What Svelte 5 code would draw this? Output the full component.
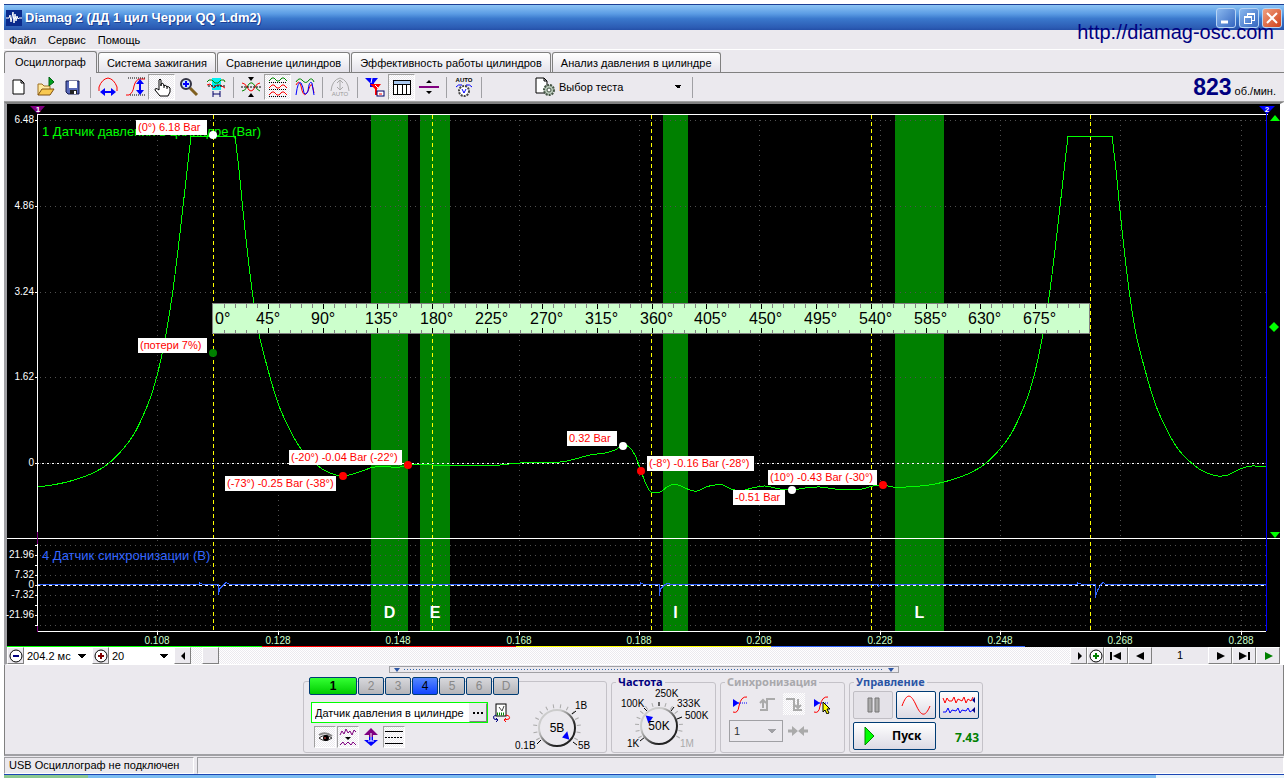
<script lang="ts">
  type Point = [number, number];

  const tabs = [
    "Осциллограф",
    "Система зажигания",
    "Сравнение цилиндров",
    "Эффективность работы цилиндров",
    "Анализ давления в цилиндре",
  ];
  let activeTab = $state(0);
  let sensor = $state("Датчик давления в цилиндре");

  const channels = ["1", "2", "3", "4", "5", "6", "D"];

  const timeLabels = ["0.108", "0.128", "0.148", "0.168", "0.188", "0.208", "0.228", "0.248", "0.268", "0.288"];
  const timeX = [157, 278, 398, 519, 639, 759, 880, 1000, 1120, 1241];

  const barAxis = [
    { y: 120, text: "6.48" },
    { y: 206, text: "4.86" },
    { y: 292, text: "3.24" },
    { y: 377, text: "1.62" },
    { y: 463, text: "0" },
  ];
  const voltAxis = [
    { y: 545, text: "" },
    { y: 555, text: "21.96" },
    { y: 565, text: "" },
    { y: 575, text: "7.32" },
    { y: 585, text: "0" },
    { y: 595, text: "-7.32" },
    { y: 605, text: "" },
    { y: 615, text: "-21.96" },
    { y: 625, text: "" },
  ];

  const bands = [
    { x: 371, width: 37, name: "D" },
    { x: 420, width: 30, name: "E" },
    { x: 663, width: 25, name: "I" },
    { x: 895, width: 49, name: "L" },
  ];
  const strokes = [213, 432, 651, 871, 1090];

  const marks = [
    { x: 136, y: 120, w: 71, text: "(0°) 6.18 Bar" },
    { x: 138, y: 338, w: 69, text: "(потери 7%)" },
    { x: 289, y: 450, w: 113, text: "(-20°) -0.04 Bar (-22°)" },
    { x: 225, y: 476, w: 111, text: "(-73°) -0.25 Bar (-38°)" },
    { x: 567, y: 431, w: 50, text: "0.32 Bar" },
    { x: 647, y: 456, w: 107, text: "(-8°) -0.16 Bar (-28°)" },
    { x: 768, y: 470, w: 109, text: "(10°) -0.43 Bar (-30°)" },
    { x: 733, y: 490, w: 52, text: "-0.51 Bar" },
  ];
  const dots = [
    { x: 213, y: 135, color: "#fff" },
    { x: 213, y: 353, color: "#008000" },
    { x: 343, y: 476, color: "#f00" },
    { x: 408, y: 465, color: "#f00" },
    { x: 623, y: 446, color: "#fff" },
    { x: 641, y: 471, color: "#f00" },
    { x: 792, y: 490, color: "#fff" },
    { x: 883, y: 485, color: "#f00" },
  ];

  const rise: Point[] = [
    [37, 487], [52, 485], [67, 482], [80, 478], [93, 473], [108, 464], [123, 449], [134, 434],
    [143, 416], [151, 396], [158, 372], [166, 334], [173, 290], [180, 233], [186, 180], [191, 136],
  ];
  const cycle: Point[] = [
    [235, 136], [239, 170], [245, 230], [252, 290], [259, 334], [270, 377], [279, 406], [290, 430],
    [301, 449], [318, 466], [330, 473], [343, 476], [353, 474], [365, 470], [375, 467], [400, 467],
    [408, 465], [432, 465], [470, 466], [500, 465], [520, 463], [560, 462], [575, 459], [590, 455],
    [605, 453], [615, 450], [623, 445], [629, 447], [635, 455], [641, 471], [646, 484], [651, 492],
    [660, 492], [667, 487], [674, 484], [681, 486], [690, 490], [697, 491], [706, 487], [715, 485],
    [723, 485], [731, 489], [741, 491], [752, 488], [765, 486], [780, 489], [792, 490], [805, 488],
    [820, 487], [835, 489], [850, 490], [862, 489], [873, 486], [883, 485], [893, 487], [906, 487],
    [929, 485], [944, 482], [957, 478], [970, 473], [985, 464], [1000, 449], [1011, 434],
    [1020, 416], [1028, 396], [1035, 372], [1043, 334], [1050, 290], [1057, 233], [1063, 180], [1068, 136],
  ];
  const fall: Point[] = [
    [1112, 136], [1116, 170], [1122, 230], [1129, 290], [1136, 334], [1147, 377], [1156, 406],
    [1167, 430], [1178, 449], [1195, 466], [1207, 473], [1218, 476], [1228, 475], [1240, 469],
    [1252, 466], [1266, 467],
  ];

  // Catmull-Rom spline through the samples
  function smooth(p: Point[]): string {
    let d = `${p[0][0]} ${p[0][1]}`;
    for (let i = 0; i < p.length - 1; i++) {
      const a = p[Math.max(i - 1, 0)];
      const b = p[i];
      const c = p[i + 1];
      const e = p[Math.min(i + 2, p.length - 1)];
      d += ` C${b[0] + (c[0] - a[0]) / 6} ${b[1] + (c[1] - a[1]) / 6} ${c[0] - (e[0] - b[0]) / 6} ${c[1] - (e[1] - b[1]) / 6} ${c[0]} ${c[1]}`;
    }
    return d;
  }

  const pressure = `M${smooth(rise)} L${smooth(cycle)} L${smooth(fall)}`;
  const sync =
    "M37 584H199V582L203 584H218V594L220 588L224 584L226 582L230 584H640V582L644 584H659V595L661 588L665 584L668 583L671 584H878V586L881 584H1077V582L1082 584H1095V597L1098 589L1101 584L1103 582L1106 584H1266";

  const rulerTicks = Array.from({ length: 79 }, (_, i) => i + 1);
  const rulerLabels = Array.from({ length: 16 }, (_, i) => i * 45);
  const degX = (deg: number) => Math.round(213 + (deg * 877) / 720);

  const ticks = (n: number, from: number, to: number) =>
    Array.from({ length: n }, (_, i) => from + ((to - from) * i) / (n - 1));
</script>

{#snippet knob(value: string, angle: number)}
  <circle r="18" fill="#ebe9ee" stroke="url(#rim)" stroke-width="2" />
  <path d="M17 1L10 -4V4Z" fill="#00f" transform="rotate({angle})" />
  <text class="knob-value" y="4" text-anchor="middle">{value}</text>
{/snippet}

<div class="screen">
  <div class="window">
    <header class="title-bar">
      <svg class="app-icon" width="16" height="16" viewBox="0 0 16 16">
        <rect width="16" height="16" fill="#0a2a8c" />
        <path d="M0 8H3L4 5L5 12L7 2L8 13L9 4L10 11L11 6L12 9L13 8H16" fill="none" stroke="#fff" />
      </svg>
      <h1>Diamag 2 (ДД 1 цил Черри QQ 1.dm2)</h1>
      <div class="caption-buttons">
        <button aria-label="Свернуть"><svg width="18" height="18"><path d="M4 13H11" stroke="#fff" stroke-width="3" /></svg></button>
        <button aria-label="Восстановить">
          <svg width="18" height="18" shape-rendering="crispEdges"><path d="M7 7V4H14V11H11M4 7H11V14H4ZM4 8H11M7 5H14" fill="none" stroke="#fff" /></svg>
        </button>
        <button class="close" aria-label="Закрыть"><svg width="18" height="18"><path d="M4 4L14 14M14 4L4 14" stroke="#fff" stroke-width="2" /></svg></button>
      </div>
    </header>
    <a class="site" href="http://diamag-osc.com">http://diamag-osc.com</a>

    <nav class="menu">
      <button>Файл</button>
      <button>Сервис</button>
      <button>Помощь</button>
    </nav>

    <div class="tabs" role="tablist">
      {#each tabs as tab, i}
        <button role="tab" class:active={activeTab === i} aria-selected={activeTab === i} onclick={() => (activeTab = i)}>{tab}</button>
      {/each}
    </div>

    <div class="toolbar">
      <button aria-label="Новый">
        <svg viewBox="0 0 20 20"><path d="M4 3H12L15 6V17H4ZM12 3V6H15" fill="#fff" stroke="#000" /></svg>
      </button>
      <button aria-label="Открыть">
        <svg viewBox="0 0 20 20">
          <path d="M2 18V7H6L8 9H14V12" fill="#ffe9a0" stroke="#a07020" />
          <path d="M2 18L6 12H18L14 18Z" fill="#f8c850" stroke="#805010" />
          <path d="M13 0V9L18 5Z" fill="#00a020" stroke="#006010" />
        </svg>
      </button>
      <button aria-label="Сохранить">
        <svg viewBox="0 0 20 20">
          <path d="M3 4H16V17H5L3 15Z" fill="#5868b8" stroke="#101850" />
          <rect x="6" y="4" width="8" height="7" fill="#fff" />
          <rect x="7" y="13" width="7" height="4" fill="#222" /><rect x="11" y="14" width="2" height="3" fill="#fff" />
        </svg>
      </button>
      <i></i>
      <button aria-label="Масштаб по горизонтали">
        <svg viewBox="0 0 20 20">
          <path d="M1 14V10Q4 2 10 1Q16 2 19 10V14" fill="none" stroke="#f00" />
          <path d="M4 15H16" stroke="#00f" stroke-width="2" /><path d="M2 15L7 11V19ZM18 15L13 11V19Z" fill="#00f" />
        </svg>
      </button>
      <button aria-label="Масштаб по вертикали">
        <svg viewBox="0 0 20 20">
          <path d="M1 18H4Q8 16 9 9Q11 2 15 2H20" fill="none" stroke="#f00" />
          <path d="M3 1H20M5 18H20" stroke="#000" stroke-dasharray="1 1" />
          <path d="M15 5V15" stroke="#00f" stroke-width="2" /><path d="M15 2L11 7H19ZM15 18L11 13H19Z" fill="#00f" />
        </svg>
      </button>
      <button class="pressed" aria-label="Рука">
        <svg viewBox="0 0 20 20">
          <path d="M7 13V3Q8 1 9 3V9V7Q11 5 12 8V9Q14 7 15 10Q17 9 18 11V15L16 19H8L3 13Q3 10 7 13Z" fill="#fff" stroke="#000" />
          <path d="M12 8V11M15 9V12" stroke="#000" />
        </svg>
      </button>
      <button aria-label="Лупа">
        <svg viewBox="0 0 20 20">
          <path d="M11 11L18 18" stroke="#806020" stroke-width="3" />
          <circle cx="7" cy="7" r="5" fill="#c8e4ff" stroke="#334" stroke-width="2" />
          <path d="M4 7H10M7 4V10" stroke="#00f" stroke-width="2" />
        </svg>
      </button>
      <button aria-label="Фрагмент">
        <svg viewBox="0 0 20 20">
          <rect x="6" y="1" width="9" height="12" fill="#00f0f0" />
          <path d="M1 5L3 3L6 3L9 6H12L15 3H18L19 5" fill="none" stroke="#080" />
          <path d="M1 8L4 7L8 11L11 8L14 8L19 11" fill="none" stroke="#f00" />
          <path d="M2 9H19" stroke="#000" stroke-dasharray="2 1" />
          <path d="M7 17H14M7 14V20M14 14V20" stroke="#006" stroke-width="1" />
        </svg>
      </button>
      <i></i>
      <button aria-label="Совместить">
        <svg viewBox="0 0 20 20">
          <path d="M1 14Q4 14 6 10Q10 2 14 9Q16 13 19 14" fill="none" stroke="#080" />
          <path d="M1 6Q4 6 6 10Q10 18 14 10Q16 6 19 6" fill="none" stroke="#f00" />
          <path d="M0 10H20" stroke="#000" stroke-dasharray="2 1" /><path d="M7 0H13L10 4ZM7 20H13L10 16Z" />
        </svg>
      </button>
      <button class="pressed" aria-label="Разнести">
        <svg viewBox="0 0 20 20">
          <path d="M1 4L4 1H6L9 4H11L14 1H16L19 4" fill="none" stroke="#080" />
          <path d="M1 11L4 8H6L9 11H11L14 8H16L19 11M1 18L4 15H6L9 18H11L14 15H16L19 18" fill="none" stroke="#f00" />
          <path d="M1 5.5H19M1 12.5H19M1 19.5H19" stroke="#000" stroke-dasharray="1 1" />
        </svg>
      </button>
      <button aria-label="Наложить">
        <svg viewBox="0 0 20 20">
          <path d="M1 5Q4 0 7 3Q11 8 14 3Q17 0 19 5" fill="none" stroke="#080" />
          <path d="M1 8Q4 2 6 9Q8 20 11 17Q13 15 15 9Q17 4 19 16" fill="none" stroke="#f00" />
          <path d="M1 18Q3 3 6 6Q8 9 9 16Q11 19 13 14Q14 3 17 6L19 18" fill="none" stroke="#00f" />
        </svg>
      </button>
      <i></i>
      <button disabled aria-label="Авто">
        <svg viewBox="0 0 20 20">
          <path d="M1 14Q2 3 10 1Q18 3 19 14M10 3V13M7 6L10 3L13 6M7 10L10 13L13 10" fill="none" stroke="#aaa" />
          <text x="10" y="19" text-anchor="middle" font-size="6" fill="#999">AUTO</text>
        </svg>
      </button>
      <i></i>
      <button aria-label="Фильтр">
        <svg viewBox="0 0 20 20">
          <path d="M0 1H13L9 6V10H5V6Z" fill="#00f" /><path d="M5 7H16L12 12V18H10V12Z" fill="#f00" />
          <path d="M7 1L6 6M10 8L13 11" stroke="#fff" />
          <rect x="12" y="14" width="7" height="5" fill="#fff" stroke="#006" /><path d="M14 17H17" stroke="#f00" />
        </svg>
      </button>
      <button class="pressed" aria-label="Таблица">
        <svg viewBox="0 0 20 20" shape-rendering="crispEdges">
          <rect x="1.5" y="3.5" width="17" height="14" fill="#fff" stroke="#000" />
          <rect x="2" y="4" width="16" height="3" fill="#a8c8f0" />
          <path d="M1 7.5H19M5.5 7V18M10.5 7V18M14.5 7V18" stroke="#000" />
        </svg>
      </button>
      <button aria-label="Разделитель">
        <svg viewBox="0 0 20 20"><path d="M0 10H20" stroke="#800080" stroke-width="2" /><path d="M7 6H13L10 3ZM7 14H13L10 17Z" /></svg>
      </button>
      <i></i>
      <button aria-label="Автонастройка">
        <svg viewBox="0 0 20 20">
          <text x="10" y="5" text-anchor="middle" font-size="6" font-weight="bold">AUTO</text>
          <circle cx="10" cy="14" r="5" fill="#fff" stroke="#444" stroke-width="2" stroke-dasharray="2 1" />
          <path d="M8 12L10 16L12 12M2 10Q4 7 8 8M18 10Q16 7 12 8" fill="none" stroke="#00f" />
        </svg>
      </button>
      <i></i>
      <label class="test-select">
        <svg width="20" height="20" viewBox="0 0 20 20">
          <path d="M1 1H9L12 4V16H1ZM9 1V4H12" fill="#fff" stroke="#000" />
          <circle cx="14" cy="13" r="5" fill="#b8c8b8" stroke="#445544" stroke-width="2" stroke-dasharray="2 1" />
          <circle cx="14" cy="13" r="2" fill="#fff" stroke="#454" />
        </svg>
        <select aria-label="Выбор теста"><option>Выбор теста</option></select>
      </label>
      <i></i>
      <p class="rpm"><strong>823</strong> об./мин.</p>
    </div>

    <main class="scope">
      <svg class="plot" viewBox="7 104 1273 542">
        <rect x="7" y="104" width="1273" height="542" />
        <g shape-rendering="crispEdges">
          {#each bands as band}
            <rect x={band.x} y="115" width={band.width} height="516" fill="#008000" />
          {/each}
          <g class="grid">
            {#each timeX as x}
              <path d="M{x}.5 120V631" />
            {/each}
            {#each barAxis as tick}
              <path d="M40 {tick.y}.5H1266" />
            {/each}
            {#each voltAxis as tick}
              <path d="M40 {tick.y}.5H1266" />
            {/each}
          </g>
          <path d="M37 463.5H1266" stroke="#fff" stroke-dasharray="2 3" />
          <path d="M37 585.5H1266" stroke="#fff" stroke-dasharray="3 3" />
          {#each strokes as x}
            <path d="M{x}.5 115V631" stroke="#ff0" stroke-dasharray="4 3" />
          {/each}
          <path d={pressure} fill="none" stroke="#0f0" />
          <path d={sync} fill="none" stroke="#36f" transform="translate(0 0.5)" />
          <path d="M37 114.5H1268M7 538.5H1280M37 631.5H1266M37.5 114V538M37.5 544V631" stroke="#fff" />
          <path d="M37.5 532V544M37.5 626V632" stroke="#800080" />
          {#each [...barAxis, ...voltAxis] as tick}
            <path d="M35 {tick.y}.5H37" stroke="#fff" />
          {/each}
          {#each timeX as x}
            <path d="M{x}.5 632V635" stroke="#fff" />
          {/each}
          <path d="M1266.5 110V631" stroke="#00f" />
        </g>

        <path d="M30 106H45L38 114Z" fill="#800080" />
        <path d="M1259 106H1275L1267 114Z" fill="#00f" />
        <g class="cursor-num">
          <text x="38" y="112">1</text>
          <text x="1267" y="112">2</text>
        </g>
        <g fill="#0f0">
          <path d="M1270 121H1280L1275 115Z" />
          <path d="M1274 322L1279 327L1274 332L1269 327Z" />
          <path d="M1270 532H1280L1275 538Z" />
        </g>

        <text class="channel" x="42" y="136" fill="#0f0">1 Датчик давления в цилиндре (Bar)</text>
        <text class="channel" x="42" y="560" fill="#36f">4 Датчик синхронизации (В)</text>
        {#each [...barAxis, ...voltAxis] as tick}
          <text class="axis" x="34" y={tick.y + 3} text-anchor="end" fill="#fff">{tick.text}</text>
        {/each}
        {#each timeLabels as label, i}
          <text class="axis" x={timeX[i]} y="644" text-anchor="middle" fill="#cfc">{label}</text>
        {/each}
        {#each bands as band}
          <text class="band" x={band.x + band.width / 2} y="618">{band.name}</text>
        {/each}

        <g class="ruler" shape-rendering="crispEdges">
          <rect x="212.5" y="303.5" width="877" height="30" fill="#cfc" stroke="#808080" />
          {#each rulerTicks as i}
            {@const major = i % 5 === 0}
            <path
              d="M{degX(i * 9)}.5 304v{major ? 5 : 4}M{degX(i * 9)}.5 333v{major ? -5 : -3}"
              stroke={major ? "#000" : "#808080"}
            />
          {/each}
          {#each rulerLabels as deg}
            <text x={deg === 0 ? 215 : degX(deg) - 12} y="324">{deg}°</text>
          {/each}
        </g>

        {#each marks as mark}
          <rect x={mark.x} y={mark.y} width={mark.w} height="15" fill="#fff" />
          <text class="mark" x={mark.x + 2} y={mark.y + 11}>{mark.text}</text>
        {/each}
        {#each dots as dot}
          <circle cx={dot.x} cy={dot.y} r="4" fill={dot.color} />
        {/each}
      </svg>

      <div class="overview"></div>

      <div class="time-bar">
        <button aria-label="Сжать"><svg width="14" height="14"><circle cx="7" cy="7" r="6" fill="#fff" stroke="#000" /><path d="M4 7H10" stroke="#000080" stroke-width="2" /></svg></button>
        <select class="span" aria-label="Развёртка"><option>204.2 мс</option></select>
        <button aria-label="Растянуть"><svg width="14" height="14"><circle cx="7" cy="7" r="6" fill="#fff" stroke="#000" /><path d="M4 7H10M7 4V10" stroke="#800000" stroke-width="2" /></svg></button>
        <select class="speed" aria-label="Скорость"><option>20</option></select>
        <button aria-label="Влево"><svg width="14" height="14"><path d="M9 3V11L5 7Z" /></svg></button>
        <div class="track"><div class="thumb"></div></div>
        <button aria-label="Вправо"><svg width="14" height="14"><path d="M6 3V11L10 7Z" /></svg></button>
        <button aria-label="Добавить"><svg width="14" height="14"><circle cx="7" cy="7" r="6" fill="#fff" stroke="#000" /><path d="M4 7H10M7 4V10" stroke="#008000" stroke-width="2" /></svg></button>
        <button class="wide" aria-label="В начало"><svg width="14" height="14"><path d="M2 3V11" stroke="#000" stroke-width="2" /><path d="M12 3V11L4 7Z" /></svg></button>
        <button class="wide" aria-label="Назад"><svg width="14" height="14"><path d="M11 3V11L3 7Z" /></svg></button>
        <span class="page">1</span>
        <button class="wide" aria-label="Вперёд"><svg width="14" height="14"><path d="M4 3V11L12 7Z" /></svg></button>
        <button class="wide" aria-label="В конец"><svg width="14" height="14"><path d="M12 3V11" stroke="#000" stroke-width="2" /><path d="M2 3V11L10 7Z" /></svg></button>
        <button class="wide" aria-label="Воспроизвести"><svg width="14" height="14"><path d="M4 3V11L12 7Z" fill="#008000" /></svg></button>
      </div>
    </main>

    <section class="panel">
      <div class="splitter">
        <svg width="6" height="4"><path d="M0 0H6L3 4Z" fill="#2b55a5" /></svg>
        <span></span>
        <svg width="6" height="4"><path d="M0 0H6L3 4Z" fill="#2b55a5" /></svg>
      </div>
      <div class="groups">
        <div class="group input-group">
          <div class="channels">
            {#each channels as ch}
              <button class:on={ch === "1"} class:blue={ch === "4"}>{ch}</button>
            {/each}
          </div>
          <div class="input-body">
            <div class="sensor-side">
              <div class="sensor-row">
                <div class="sensor">
                  <input type="text" aria-label="Датчик" bind:value={sensor} />
                  <button aria-label="Выбрать датчик">
                    <svg width="10" height="10" shape-rendering="crispEdges"><path d="M0 5H2M4 5H6M8 5H10" stroke="#000" stroke-width="2" /></svg>
                  </button>
                </div>
                <button class="flat" aria-label="Обнулить">
                  <svg width="20" height="20" viewBox="0 0 20 20">
                    <rect x="4" y="1" width="10" height="12" fill="#fff" stroke="#000" /><path d="M5 11H13" stroke="#080" stroke-width="3" stroke-dasharray="1 1" />
                    <path d="M7 4L10 8L12 3" fill="none" stroke="#444" />
                    <path d="M4 12Q0 13 2 16L6 17M4 15L6 17L4 19" fill="none" stroke="#000080" /><path d="M14 12Q19 13 17 16L12 17M14 15L12 17L14 19" fill="none" stroke="#f00" />
                  </svg>
                </button>
              </div>
              <div class="mode-row">
                <button class="flat pressed" aria-label="Видимость">
                  <svg width="20" height="20" viewBox="0 0 20 20">
                    <path d="M4 8Q10 4 17 9" fill="none" stroke="#888" stroke-width="2" /><path d="M4 11Q10 6 17 11Q10 16 4 11Z" fill="#fff" stroke="#333" />
                    <circle cx="11" cy="11" r="3" /><circle cx="10" cy="11" r="1" fill="#a33" />
                  </svg>
                </button>
                <button class="flat pressed" aria-label="Сглаживание">
                  <svg width="20" height="20" viewBox="0 0 20 20">
                    <path d="M2 8L4 4L6 7L8 2L10 6L12 4L14 8L16 3L18 5" fill="none" stroke="#800080" />
                    <path d="M7 10H13L10 13Z" /><path d="M2 18L5 15L7 18L10 15L13 18L15 15L18 18" fill="none" stroke="#800080" />
                  </svg>
                </button>
                <button class="flat" aria-label="Инверсия">
                  <svg width="20" height="20" viewBox="0 0 20 20">
                    <path d="M10 1L17 8H12V10H8V8H3Z" fill="#800080" /><path d="M8 10H12V13H17L10 19L3 13H8Z" fill="#00f" /><path d="M10 6V14M7 14H13" stroke="#fff" />
                  </svg>
                </button>
                <button class="flat pressed" aria-label="Линии">
                  <svg width="20" height="20" viewBox="0 0 20 20" shape-rendering="crispEdges">
                    <path d="M1 4.5H19M1 16.5H19" stroke="#000" /><path d="M1 10.5H19" stroke="#000" stroke-dasharray="2 1" />
                  </svg>
                </button>
              </div>
            </div>
            <div class="dial">
              <svg width="92" height="60" viewBox="-48 -36 92 60">
                <defs>
                  <linearGradient id="rim" x1="0" y1="0" x2="1" y2="1">
                    <stop offset="0.3" stop-color="#ccc" /><stop offset="0.7" stop-color="#222" />
                  </linearGradient>
                </defs>
                {#each ticks(14, 150, 390) as a}
                  <path d="M20 0H24" stroke="#aaa" transform="rotate({a})" />
                {/each}
                <path d="M-20 16L-16 12M16 14L20 17M15 -14L19 -17" stroke="#000" />
                {@render knob("5В", 40)}
                <text x="-42" y="21">0.1В</text><text x="18" y="-19">1В</text><text x="21" y="21">5В</text>
              </svg>
              <input type="range" aria-label="Диапазон" min="0" max="8" value="8" />
            </div>
          </div>
        </div>

        <fieldset class="group freq">
          <legend>Частота</legend>
          <div class="dial">
            <svg width="94" height="60" viewBox="-42 -36 94 60">
              {#each ticks(15, 150, 390) as a}
                <path d="M20 0H24" stroke="#aaa" transform="rotate({a})" />
              {/each}
              <path d="M-19 15L-14 11M-15 -18L-12 -15M0 -24V-20M12 -15L15 -19M18 -7L23 -9" stroke="#000" />
              {@render knob("50K", 215)}
              <text x="-32" y="21">1K</text><text x="-38" y="-19">100K</text><text x="-4" y="-29">250K</text>
              <text x="18" y="-19">333K</text><text x="26" y="-7">500K</text><text x="21" y="21" fill="#aaa">1M</text>
            </svg>
            <input type="range" aria-label="Частота" min="0" max="9" value="3" />
          </div>
        </fieldset>

        <fieldset class="group trigger">
          <legend>Синхронизация</legend>
          <div class="trigger-row">
            <button class="flat" aria-label="Уровень">
              <svg width="20" height="20" viewBox="0 0 20 20"><path d="M3 18Q8 20 9 12Q11 2 17 3" fill="none" stroke="#f00" /><path d="M3 5V13L9 9Z" fill="#00f" /><path d="M8 9H18" stroke="#00f" stroke-dasharray="1 1" /></svg>
            </button>
            <button class="flat" disabled aria-label="Фронт">
              <svg width="20" height="20" viewBox="0 0 20 20"><path d="M3 16H10V5H18M6 6V14M3 9L6 6L9 9" fill="none" stroke="#aaa" stroke-width="2" /></svg>
            </button>
            <button class="flat hatched" disabled aria-label="Спад">
              <svg width="20" height="20" viewBox="0 0 20 20"><path d="M2 5H10V16H18M14 5V13M11 11L14 14L17 11" fill="none" stroke="#aaa" stroke-width="2" /></svg>
            </button>
            <button class="flat" aria-label="Выбор уровня">
              <svg width="20" height="20" viewBox="0 0 20 20"><path d="M3 18Q8 20 9 12Q11 2 17 3" fill="none" stroke="#f00" /><path d="M3 5V13L9 9Z" fill="#00f" /><path d="M8 9H17" stroke="#00f" stroke-dasharray="1 1" /><path d="M12 8V18L14 16L16 20L18 19L16 15H19Z" fill="#ff0" stroke="#000" /></svg>
            </button>
          </div>
          <div class="trigger-row">
            <select class="sync-channel" disabled aria-label="Канал"><option>1</option></select>
            <svg width="20" height="12" viewBox="0 0 20 12"><path d="M0 6H6M14 6H20" stroke="#aaa" stroke-width="3" /><path d="M4 1V11L10 6ZM16 1V11L10 6Z" fill="#aaa" /></svg>
          </div>
        </fieldset>

        <fieldset class="group control">
          <legend>Управление</legend>
          <div class="control-row">
            <button class="big" disabled aria-label="Пауза"><svg width="20" height="20"><path d="M5 3H9V17H5ZM12 3H16V17H12Z" fill="#aaa" stroke="#777" /></svg></button>
            <button class="big" aria-label="Один кадр"><svg width="32" height="22"><path d="M2 12C7 -2 11 0 16 11S25 24 30 12" fill="none" stroke="#f00" /></svg></button>
            <button class="big" aria-label="Непрерывно">
              <svg width="34" height="22">
                <path d="M1 4L3 9L5 4L7 7L10 7L12 3L14 9L16 5L20 7L22 3L24 9L26 5L29 7L31 3" fill="none" stroke="#f00" />
                <path d="M1 18L4 18L6 14L8 19L10 16L14 17L16 14L18 19L20 16L24 17L26 14L28 18L31 16" fill="none" stroke="#00f" />
                <path d="M33 3V9L30 6ZM33 13V19L30 16Z" fill="#000080" />
              </svg>
            </button>
          </div>
          <div class="control-row">
            <button class="big run"><svg width="12" height="20"><path d="M1 1V19L10 10Z" fill="#0f0" stroke="#080" /></svg><span>Пуск</span></button>
            <output>7.43</output>
          </div>
        </fieldset>
      </div>
    </section>

    <footer class="status">
      <span>USB Осциллограф не подключен</span>
      <span class="rest"></span>
    </footer>
  </div>
  <div class="taskbar"><div class="start"></div><div class="tray"></div></div>
</div>

<style>
  :global(body) {
    margin: 0;
    background: #fff;
  }

  .screen {
    padding: 4px 4px 0;
    font: 11px/14px "Liberation Sans", Arial, sans-serif;
    color: #000;
  }

  .window {
    position: relative;
    background: #ebe9ee;
  }

  button,
  select,
  input {
    font: inherit;
    color: inherit;
    padding: 0;
    margin: 0;
    border: 0;
    border-radius: 0;
    background: none;
  }

  svg {
    display: block;
  }

  .title-bar {
    display: flex;
    align-items: center;
    height: 26px;
    padding: 0 2px;
    box-sizing: border-box;
    border-top: 1px solid #1c3f94;
    background: linear-gradient(#8cc4f4, #5b9ce4 35%, #3a78cc 55%, #2c5cb4 90%, #2450a8);
  }

  .title-bar h1 {
    flex: 1;
    margin: 0 0 0 3px;
    font: bold 13px/20px "Liberation Sans", Arial, sans-serif;
    color: #fff;
    text-shadow: 1px 1px #1c3f94;
  }

  .caption-buttons {
    display: flex;
    gap: 3px;
  }

  .caption-buttons button {
    width: 20px;
    height: 20px;
    border: 1px solid #b8d4f4;
    border-radius: 3px;
    background: linear-gradient(135deg, #8ab8ee, #3466c0);
  }

  .caption-buttons .close {
    background: linear-gradient(135deg, #f0a080, #d04018);
  }

  .site {
    position: absolute;
    right: 10px;
    top: 16px;
    font: 20px/24px "Liberation Sans", Arial, sans-serif;
    color: #000080;
    text-decoration: none;
  }

  .menu {
    display: flex;
    gap: 12px;
    height: 19px;
    padding-left: 5px;
    border-bottom: 1px solid #fff;
  }

  .tabs {
    display: flex;
    align-items: flex-end;
    gap: 1px;
    height: 22px;
    border-bottom: 1px solid #808080;
  }

  .tabs button {
    height: 20px;
    padding: 0 8px;
    border: 1px solid #808080;
    border-bottom: 0;
    border-radius: 3px 3px 0 0;
    background: linear-gradient(#fff, #e4e2ea);
  }

  .tabs .active {
    height: 22px;
    padding: 0 10px 2px;
    margin-bottom: -1px;
    background: #ebe9ee;
  }

  .toolbar {
    display: flex;
    align-items: center;
    height: 28px;
    padding: 0 8px 0 1px;
    border-bottom: 1px solid #a0a0a0;
  }

  .toolbar > button {
    display: grid;
    place-items: center;
    width: 27px;
    height: 26px;
  }

  .toolbar button svg {
    width: 20px;
    height: 20px;
  }

  .pressed {
    border: 1px solid;
    border-color: #a0a0a0 #fff #fff #a0a0a0;
  }

  .pressed,
  .hatched {
    background: repeating-conic-gradient(#fff 0 25%, #ebe9ee 0 50%) 0 0 / 2px 2px;
  }

  .toolbar i {
    width: 1px;
    height: 21px;
    margin: 0 3px 0 4px;
    background: #a0a0a4;
  }

  .test-select {
    display: flex;
    align-items: center;
    gap: 4px;
    margin-left: 50px;
  }

  .test-select select {
    width: 129px;
  }

  select {
    --arrow: #000;
    appearance: none;
    opacity: 1;
    background: conic-gradient(from 315deg at 50% 100%, var(--arrow) 90deg, transparent 0) right 6px center / 8px 4px
      no-repeat;
  }

  .rpm {
    margin: 0 0 0 auto;
    white-space: nowrap;
  }

  .rpm strong {
    font: bold 23px/24px "Liberation Sans", Arial, sans-serif;
    color: #000080;
  }

  .scope {
    border: solid;
    border-color: #808080 #fff #fff #a0a0a4;
    border-width: 2px 4px 1px 3px;
  }

  .plot {
    width: 100%;
    height: auto;
    overflow: visible;
    font-family: "Liberation Sans", Arial, sans-serif;
  }

  .grid {
    stroke: #505050;
    stroke-dasharray: 1 4;
  }

  .channel {
    font-size: 13px;
  }

  .axis {
    font-size: 10px;
  }

  .cursor-num {
    font-size: 8px;
    font-weight: bold;
    fill: #fff;
    text-anchor: middle;
  }

  .band {
    font-size: 16px;
    font-weight: bold;
    fill: #fff;
    text-anchor: middle;
  }

  .ruler text {
    font-size: 16px;
  }

  .mark {
    font-size: 11px;
    fill: #f00;
  }

  .overview {
    height: 1px;
    background: linear-gradient(90deg, #0f0 20%, #f00 20% 40%, #ff0 40% 60%, #36f 60% 80%, #000 80%);
  }

  .time-bar {
    display: flex;
    height: 17px;
    background: #ebe9ee;
  }

  .time-bar button,
  .thumb {
    display: grid;
    place-items: center;
    width: 17px;
    box-sizing: border-box;
    border: 1px solid;
    border-color: #fff #808080 #808080 #fff;
    background: #ebe9ee;
  }

  .time-bar .wide {
    width: 24px;
  }

  .time-bar select {
    padding-left: 3px;
    background-color: #fff;
  }

  .span {
    width: 68px;
  }

  .speed {
    width: 65px;
  }

  .track {
    display: flex;
    flex: 1;
    padding-left: 11px;
    background: repeating-conic-gradient(#fff 0 25%, #ebe9ee 0 50%) 0 0 / 2px 2px;
  }

  .page {
    width: 56px;
    line-height: 17px;
    text-align: center;
  }

  .panel {
    padding: 1px 0 0;
    border-bottom: 2px solid #a0a0a4;
    border-left: 1px solid #808080;
    border-right: 1px solid #808080;
  }

  .splitter {
    display: flex;
    align-items: center;
    justify-content: space-between;
    gap: 4px;
    width: 500px;
    height: 5px;
    margin: 0 auto;
    padding: 0 4px;
    border: 1px solid #a0a0a4;
  }

  .splitter span {
    flex: 1;
    height: 1px;
    background: linear-gradient(90deg, #36a 1px, transparent 1px) 0 0 / 3px 1px repeat-x;
  }

  .groups {
    display: flex;
    justify-content: center;
    gap: 4px;
    padding: 3px 2px 1px 0;
  }

  .group {
    box-sizing: border-box;
    height: 77px;
    min-width: 0;
    margin: 0;
    padding: 0;
    border: 1px solid #c4c2c8;
    border-radius: 3px;
  }

  fieldset legend {
    margin-left: 4px;
    padding: 0 2px;
    font: bold 11px/12px "Noto Sans", sans-serif;
    color: #000080;
  }

  .input-group {
    width: 304px;
    height: 72px;
    margin-top: 5px;
  }

  .channels {
    display: flex;
    gap: 1px;
    margin: -5px 0 0 5px;
  }

  .channels button {
    width: 26px;
    height: 18px;
    border: 1px solid #003c74;
    border-radius: 2px;
    background: linear-gradient(#d8d8dc, #b4b4b8);
    color: #888;
    font-size: 12px;
  }

  .channels .on {
    width: 48px;
    background: linear-gradient(#3f3, #0c0);
    color: #000;
    font-weight: bold;
  }

  .channels .blue {
    background: linear-gradient(#58f, #14f);
    color: #000;
  }

  .input-body {
    display: flex;
  }

  .sensor-side {
    margin: 7px 0 0 7px;
  }

  .sensor-row,
  .mode-row {
    display: flex;
    gap: 3px;
  }

  .sensor {
    display: flex;
    width: 175px;
    height: 19px;
    border: 1px solid #0f0;
    background: #fff;
  }

  .sensor input {
    flex: 1;
    min-width: 0;
    padding-left: 3px;
  }

  .sensor button {
    display: grid;
    place-items: center;
    width: 18px;
    border: 1px solid #a0a0a4;
    border-color: #ebe9ee #808080 #808080 #ebe9ee;
    background: #ebe9ee;
  }

  .mode-row {
    margin: 2px 0 0 3px;
    gap: 1px;
  }

  .flat {
    display: grid;
    place-items: center;
    width: 22px;
    height: 22px;
    box-sizing: border-box;
  }

  .dial {
    position: relative;
    font: 10px/12px "Liberation Sans", Arial, sans-serif;
  }

  .input-body .dial {
    margin: -3px 0 0 -4px;
  }

  .dial svg {
    overflow: visible;
  }

  .dial input {
    position: absolute;
    left: 28px;
    top: 16px;
    width: 40px;
    height: 40px;
    opacity: 0;
  }

  .knob-value {
    font-size: 12px;
  }

  .freq {
    width: 105px;
  }

  .freq .dial {
    margin: 2px 0 0 5px;
  }

  .trigger {
    width: 125px;
  }

  .trigger legend {
    color: #a8a8ac;
  }

  .trigger-row {
    display: flex;
    align-items: center;
    gap: 5px;
    padding: 5px 0 0 8px;
  }

  .sync-channel {
    --arrow: #a0a0a4;
    width: 54px;
    height: 22px;
    padding-left: 4px;
    border: 1px solid #a0a0a4;
    color: #333;
  }

  .control {
    width: 134px;
  }

  .control legend {
    color: #2b55a5;
  }

  .control-row {
    display: flex;
    align-items: center;
    gap: 3px;
    padding: 3px 3px 0;
  }

  .big {
    display: grid;
    place-items: center;
    width: 40px;
    height: 28px;
    box-sizing: border-box;
    border: 1px solid #003c74;
    border-radius: 2px;
    background: linear-gradient(#fff, #dcdae4);
  }

  .big:disabled {
    border-color: #c0bec4;
    background: #e4e2e8;
  }

  .run {
    display: flex;
    align-items: center;
    gap: 16px;
    width: 83px;
    padding-left: 10px;
    font: bold 12px/14px "Noto Sans", sans-serif;
  }

  output {
    margin: 4px 0 0 auto;
    font: bold 12px/14px "Noto Sans", sans-serif;
    color: #008000;
  }

  .status {
    display: flex;
    gap: 3px;
    height: 18px;
    box-sizing: border-box;
    padding-top: 1px;
  }

  .status span {
    width: 184px;
    padding-left: 4px;
    border: 1px solid;
    border-color: #a0a0a4 #fff #fff #a0a0a4;
    white-space: nowrap;
  }

  .status .rest {
    flex: 1;
  }

  .taskbar {
    display: flex;
    justify-content: space-between;
    height: 3px;
    border-top: 1px solid #1c46b4;
    background: #7cbcf0;
  }

  .start {
    width: 84px;
    background: #8cc890;
  }

  .tray {
    width: 10%;
    background: #e8f4fc;
  }
</style>
